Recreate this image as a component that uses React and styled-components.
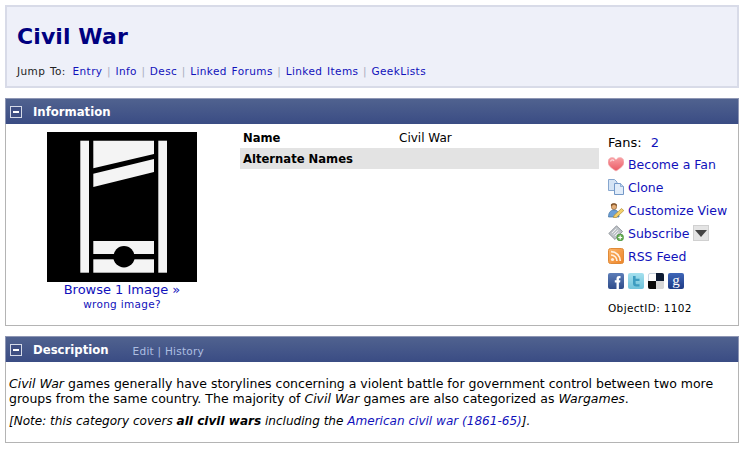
import React from 'react'
import styled, { createGlobalStyle } from 'styled-components'

const GlobalStyle = createGlobalStyle`
    html, body {
        margin: 0;
        padding: 0;
        background: #FFFFFF;
    }
    body {
        font-family: "DejaVu Sans", Verdana, sans-serif;
        font-size: 13px;
        color: #000000;
    }
    a {
        color: #1111BB;
        text-decoration: none;
    }
`;

const Page = styled.div`
    width: 740px;
    height: 449px;
    box-sizing: border-box;
    padding: 5px 1px 0 5px;
    overflow: hidden;
    display: flex;
    flex-direction: column;
    gap: 10px;
`;

const TitleBox = styled.div`
    height: 83px;
    box-sizing: border-box;
    border: 2px solid #D8DBE8;
    background: #EEF0F9;
    padding: 16px 10px 0;
`;

const Title = styled.h1`
    margin: 0;
    font-size: 22px;
    line-height: 28px;
    font-weight: 700;
    letter-spacing: 0.1px;
    color: #000080;
`;

const JumpBar = styled.div`
    margin-top: 13px;
    font-size: 10.5px;
    line-height: 14px;
    color: #222222;
    letter-spacing: 0.4px;
    word-spacing: 1px;
`;

const JumpLabel = styled.span`
    margin-right: 2px;
`;

const Pipe = styled.span`
    color: #A9AEBF;
    margin: 0 4.5px;
`;

const Panel = styled.section`
    border: 1px solid #B4B4B4;
    border-top: 0;
    height: ${({ $height }) => $height}px;
    box-sizing: border-box;
    display: flex;
    flex-direction: column;
`;

const PanelHead = styled.header`
    height: 26px;
    flex: none;
    margin: 0 -1px;
    box-sizing: border-box;
    border: 1px solid #8E96B4;
    border-bottom: 0;
    background: linear-gradient(#50628F, #3A4C84);
    display: flex;
    align-items: center;
    padding: 0 0 0 4px;
    color: #FFFFFF;
`;

const Toggle = styled.span`
    width: 10px;
    height: 10px;
    border: 1px solid #D5DAE8;
    background: #3F4F83;
    display: flex;
    align-items: center;
    justify-content: center;
    margin-right: 11px;
    &::before {
        content: "";
        width: 6px;
        height: 2px;
        background: #FFFFFF;
    }
`;

const PanelTitle = styled.h2`
    margin: 0;
    font-size: 11.7px;
    font-weight: 700;
`;

const HeadLinks = styled.div`
    margin-left: 24px;
    font-size: 10.5px;
    letter-spacing: 0.25px;
    color: #AEBFE2;
    padding-top: 2px;
`;

const InfoBody = styled.div`
    flex: 1;
    display: flex;
    padding-top: 3px;
`;

const ImageCol = styled.div`
    width: 234px;
    flex: none;
    padding: 5px 2px 0 0;
    box-sizing: border-box;
    display: flex;
    flex-direction: column;
    align-items: center;
`;

const BrowseLink = styled.a`
    display: block;
    font-size: 13px;
    line-height: 16px;
`;

const WrongLink = styled.a`
    display: block;
    font-size: 10.5px;
    letter-spacing: 0.3px;
    line-height: 12px;
`;

const NamesCol = styled.div`
    width: 359px;
    flex: none;
`;

const NameRow = styled.div`
    display: flex;
    height: 21px;
    align-items: center;
    padding-left: 3px;
    font-size: 12px;
    background: ${({ $shaded }) => ($shaded ? '#E3E3E3' : 'transparent')};
`;

const NameLabel = styled.div`
    width: 156px;
    font-weight: 700;
    font-size: 11.6px;
    white-space: nowrap;
`;

const SideCol = styled.div`
    margin-left: 9px;
    padding-top: 5px;
    display: flex;
    flex-direction: column;
    font-size: 12.5px;
`;

const Fans = styled.div`
    height: 20.5px;
    display: flex;
    align-items: center;
    gap: 9px;
    font-size: 13px;
`;

const SideRow = styled.a`
    height: 23px;
    display: flex;
    align-items: center;
    gap: 4px;
    white-space: nowrap;
`;

const IconRow = styled.div`
    display: flex;
    gap: 4px;
    margin-top: 5px;
`;

const ObjectId = styled.div`
    font-size: 10.5px;
    margin-top: 13px;
    letter-spacing: 0.35px;
`;

const DescBody = styled.div`
    padding: 14px 3px 0;
    line-height: 15px;
`;

const DescText = styled.p`
    margin: 0 0 8px;
    font-size: ${({ $size }) => $size}px;
`;

function Guillotine() {
    return (
        <svg width="150" height="150" viewBox="0 0 150 150" style={{ display: 'block' }}>
            <rect width="150" height="150" fill="#000" />
            <g fill="#F4F4F4">
                <rect x="33.3" y="8.7" width="8.7" height="132" />
                <rect x="111.3" y="8.7" width="8.7" height="132" />
                <polygon points="46.3,8.7 107,8.7 107,22 46.3,36.3" />
                <polygon points="46.3,41.7 107,27 107,40 46.3,55" />
                <rect x="46.3" y="109" width="60.7" height="13" />
                <rect x="46.3" y="127.3" width="60.7" height="13.4" />
            </g>
            <circle cx="77" cy="124.7" r="10.7" fill="#000" />
        </svg>
    );
}

function Heart() {
    return (
        <svg width="16" height="16" viewBox="0 0 16 16">
            <defs>
                <linearGradient id="heartFill" x1="0" y1="0" x2="0" y2="1">
                    <stop offset="0" stopColor="#F9A0A4" />
                    <stop offset="1" stopColor="#EA5A64" />
                </linearGradient>
            </defs>
            <path d="M8 15 C3 12 0 9.5 0 6 C0 3 2 1.5 4.2 1.5 C6 1.5 7 2.5 8 3.8 C9 2.5 10 1.5 11.8 1.5 C14 1.5 16 3 16 6 C16 9.5 13 12 8 15 Z" fill="url(#heartFill)" stroke="#F3B4B7" strokeWidth="0.7" />
            <path d="M2.5 5.5 C3 3.8 5 3.4 6 4.8" fill="none" stroke="#FDDADC" strokeWidth="1.3" />
        </svg>
    );
}

function CloneIcon() {
    return (
        <svg width="16" height="16" viewBox="0 0 16 16">
            <path d="M0.5 0.5 H6.5 L9 3 V11.5 H0.5 Z" fill="#D5E4F5" stroke="#86A6CF" />
            <path d="M6.5 4.5 H12.5 L15.5 7.5 V15.5 H6.5 Z" fill="#E1ECF9" stroke="#7499C8" />
            <path d="M12.5 4.5 V7.5 H15.5" fill="#BFD4EE" stroke="#7499C8" strokeWidth="0.7" />
        </svg>
    );
}

function CustomizeIcon() {
    return (
        <svg width="16" height="16" viewBox="0 0 16 16">
            <path d="M2.8 3 C3 0.8 8.5 0.5 9 3 L8.6 4.5 H3.2 Z" fill="#7A4A20" />
            <circle cx="6" cy="5" r="2.6" fill="#E3AE78" stroke="#8A5A2C" strokeWidth="0.6" />
            <path d="M0.5 15 C0.5 10 3 8 6 8 C9 8 11 9.5 11 15 Z" fill="#6C9FD6" stroke="#41719F" strokeWidth="0.7" />
            <path d="M6 13.5 L13.5 6.5 L15.8 8.6 L8.3 15.5 L5.5 15.7 Z" fill="#F4D06A" stroke="#B08C34" strokeWidth="0.7" />
        </svg>
    );
}

function SubscribeIcon() {
    return (
        <svg width="16" height="16" viewBox="0 0 16 16">
            <path d="M0.8 8.5 L8.5 0.8 L14.5 6.5 L7 14.5 Z" fill="#BEC3C8" stroke="#7F858C" strokeWidth="0.8" />
            <path d="M4 8 L8.3 3.7 M5.5 9.5 L9.8 5.2 M7 11 L10.5 7.5" stroke="#F4F4F4" strokeWidth="0.9" />
            <circle cx="12.2" cy="12.5" r="3.4" fill="#69AF57" stroke="#3F8A34" strokeWidth="0.6" />
            <path d="M10.2 12.5 H14.2 M12.2 10.5 V14.5" stroke="#FFF" strokeWidth="1.2" />
        </svg>
    );
}

function RssIcon() {
    return (
        <svg width="16" height="16" viewBox="0 0 16 16">
            <defs>
                <linearGradient id="rssFill" x1="0" y1="0" x2="1" y2="1">
                    <stop offset="0" stopColor="#FBB569" />
                    <stop offset="1" stopColor="#EE8428" />
                </linearGradient>
            </defs>
            <rect x="0.5" y="0.5" width="15" height="15" rx="2" fill="url(#rssFill)" stroke="#E08A38" />
            <circle cx="4.5" cy="11.5" r="1.6" fill="#FFF0DF" />
            <path d="M3 7 A6 6 0 0 1 9 13 M3 3.7 A9.3 9.3 0 0 1 12.3 13" fill="none" stroke="#FFF0DF" strokeWidth="1.7" />
        </svg>
    );
}

const shareBase = { width: 16, height: 16, viewBox: '0 0 16 16' };

function Facebook() {
    return (
        <svg {...shareBase}>
            <defs>
                <linearGradient id="fbFill" x1="0" y1="0" x2="0" y2="1">
                    <stop offset="0" stopColor="#5C7DB8" />
                    <stop offset="1" stopColor="#2F4C8A" />
                </linearGradient>
            </defs>
            <rect width="16" height="16" rx="2" fill="url(#fbFill)" />
            <path d="M8.5 16 V9.5 H6.8 V7.2 H8.5 V5.6 C8.5 3.8 9.6 3 11 3 H12.5 V5.2 H11.6 C11 5.2 10.9 5.5 10.9 6 V7.2 H12.4 L12.1 9.5 H10.9 V16 Z" fill="#FFF" />
        </svg>
    );
}

function Twitter() {
    return (
        <svg {...shareBase}>
            <defs>
                <linearGradient id="twFill" x1="0" y1="0" x2="0" y2="1">
                    <stop offset="0" stopColor="#A4E0EE" />
                    <stop offset="1" stopColor="#6FC2DA" />
                </linearGradient>
            </defs>
            <rect width="16" height="16" rx="2" fill="url(#twFill)" />
            <path d="M5 3 H7.6 V5.8 H11.5 V8 H7.6 V10 C7.6 10.9 8.2 11.2 9 11.2 H11.5 V13.5 H8.2 C6.2 13.5 5 12.5 5 10.5 Z" fill="#3C9CC0" />
        </svg>
    );
}

function Delicious() {
    return (
        <svg {...shareBase}>
            <rect x="0.5" y="0.5" width="15" height="15" rx="1.5" fill="#FFFFFF" stroke="#C9D3DF" />
            <path d="M8 0 H14 A2 2 0 0 1 16 2 V8 H8 Z" fill="#0E1B33" />
            <path d="M0 8 H8 V16 H2 A2 2 0 0 1 0 14 Z" fill="#0A0A0A" />
            <path d="M8 8 H16 V14 A2 2 0 0 1 14 16 H8 Z" fill="#D6D6D6" />
        </svg>
    );
}

function Google() {
    return (
        <svg {...shareBase}>
            <defs>
                <linearGradient id="gFill" x1="0" y1="0" x2="0" y2="1">
                    <stop offset="0" stopColor="#3F66B8" />
                    <stop offset="1" stopColor="#1E3C86" />
                </linearGradient>
            </defs>
            <rect width="16" height="16" rx="2" fill="url(#gFill)" />
            <text x="8" y="12" textAnchor="middle" fontSize="15" fontFamily="Liberation Serif, serif" fill="#FFFFFF">g</text>
        </svg>
    );
}

const DropButton = styled.span`
    width: 16px;
    height: 16px;
    background: #E4E4E4;
    border: 1px solid #D0D0D0;
    box-sizing: border-box;
    display: inline-flex;
    align-items: center;
    justify-content: center;
    &::before {
        content: "";
        border-left: 6px solid transparent;
        border-right: 6px solid transparent;
        border-top: 7px solid #444444;
    }
`;

const jumpLinks = ['Entry', 'Info', 'Desc', 'Linked Forums', 'Linked Items', 'GeekLists'];

export default function App() {
    return (
        <Page>
            <GlobalStyle />
            <TitleBox>
                <Title>Civil War</Title>
                <JumpBar>
                    <JumpLabel>Jump To:</JumpLabel> {jumpLinks.map((nome, i) => (
                        <span key={nome}>
                            {i > 0 && <Pipe>|</Pipe>}
                            <a href="#">{nome}</a>
                        </span>
                    ))}
                </JumpBar>
            </TitleBox>

            <Panel $height={228}>
                <PanelHead>
                    <Toggle />
                    <PanelTitle>Information</PanelTitle>
                </PanelHead>
                <InfoBody>
                    <ImageCol>
                        <Guillotine />
                        <BrowseLink href="#">Browse 1 Image »</BrowseLink>
                        <WrongLink href="#">wrong image?</WrongLink>
                    </ImageCol>
                    <NamesCol>
                        <NameRow>
                            <NameLabel>Name</NameLabel>
                            <div>Civil War</div>
                        </NameRow>
                        <NameRow $shaded>
                            <NameLabel>Alternate Names</NameLabel>
                        </NameRow>
                    </NamesCol>
                    <SideCol>
                        <Fans>Fans: <a href="#">2</a></Fans>
                        <SideRow href="#"><Heart />Become a Fan</SideRow>
                        <SideRow href="#"><CloneIcon />Clone</SideRow>
                        <SideRow href="#"><CustomizeIcon />Customize View</SideRow>
                        <SideRow href="#"><SubscribeIcon />Subscribe<DropButton /></SideRow>
                        <SideRow href="#"><RssIcon />RSS Feed</SideRow>
                        <IconRow>
                            <Facebook />
                            <Twitter />
                            <Delicious />
                            <Google />
                        </IconRow>
                        <ObjectId>ObjectID: 1102</ObjectId>
                    </SideCol>
                </InfoBody>
            </Panel>

            <Panel $height={107}>
                <PanelHead>
                    <Toggle />
                    <PanelTitle>Description</PanelTitle>
                    <HeadLinks>Edit | History</HeadLinks>
                </PanelHead>
                <DescBody>
                    <DescText $size={12.5}>
                        <em>Civil War</em> games generally have storylines concerning a violent battle for government control between two more groups from the same country. The majority of <em>Civil War</em> games are also categorized as <em>Wargames</em>.
                    </DescText>
                    <DescText $size={12.05}>
                        <em>[Note: this category covers <strong>all civil wars</strong> including the <a href="#">American civil war (1861-65)</a>].</em>
                    </DescText>
                </DescBody>
            </Panel>
        </Page>
    );
}
